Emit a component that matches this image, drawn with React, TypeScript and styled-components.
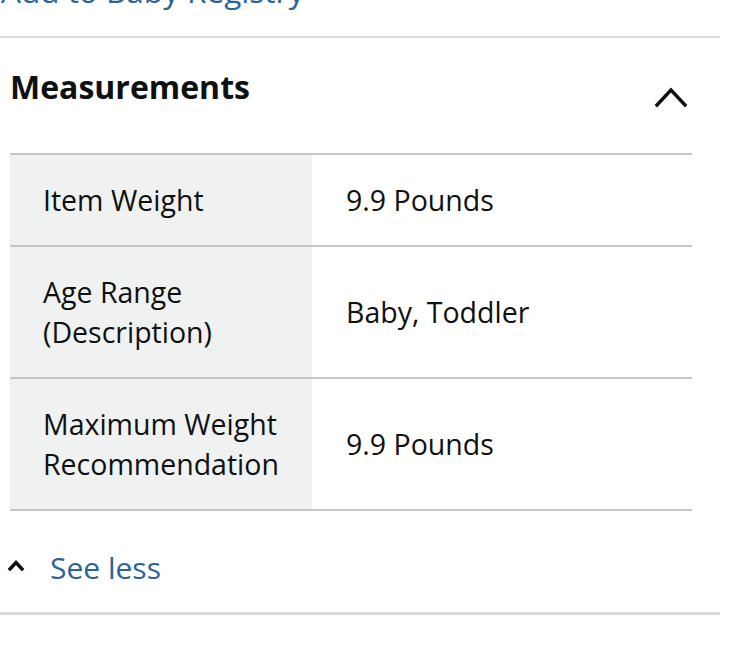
import React from "react";
import styled, { createGlobalStyle } from "styled-components";

const Global = createGlobalStyle`
  html, body { margin: 0; padding: 0; background: #fff; }
  body { font-family: "Open Sans", "Noto Sans", sans-serif; color: #0f1111; overflow: hidden; }
`;

const Page = styled.div`
  width: 739px;
  height: 646px;
  overflow: hidden;
  display: flex;
  flex-direction: column;
`;

const TopLink = styled.div`
  margin-top: -28px;
  padding-left: 1px;
  font-size: 31.5px;
  line-height: 38px;
  color: #2b6496;
  white-space: nowrap;
`;

const Divider = styled.div<{ $top: number; $thick: number }>`
  margin-top: ${(p) => p.$top}px;
  width: 720px;
  height: ${(p) => p.$thick}px;
  background: #d9dcdc;
  flex-shrink: 0;
`;

const Header = styled.div`
  display: flex;
  align-items: flex-start;
  justify-content: space-between;
  width: 692px;
  padding: 0 4px 0 10px;
  margin-top: 27px;
  height: 56px;
  box-sizing: border-box;
`;

const Title = styled.h2`
  margin: 0;
  font-size: 32px;
  font-weight: 700;
  line-height: 44px;
  color: #0f1111;
`;

const HeaderChevron = styled.svg`
  display: block;
  margin-top: 21px;
`;

const SmallChevron = styled.svg`
  display: block;
  margin-bottom: 7px;
`;

const Table = styled.div`
  margin: 32px 0 0 10px;
  width: 682px;
  border-top: 2px solid #c4c7c7;
  display: flex;
  flex-direction: column;
`;

const Row = styled.div`
  display: grid;
  grid-template-columns: 302px 1fr;
  border-bottom: 2px solid #c4c7c7;
`;

const Cell = styled.div<{ $label?: boolean }>`
  background: ${(p) => (p.$label ? "#f0f2f2" : "#fff")};
  padding: 25px 16px 25px ${(p) => (p.$label ? 33 : 34)}px;
  font-size: 28.5px;
  line-height: 40px;
  display: flex;
  align-items: center;
  color: #0f1111;
`;

const SeeLess = styled.div`
  display: flex;
  align-items: center;
  gap: 25px;
  margin-top: 35px;
  padding-left: 7px;
  height: 44px;
`;

const SeeLessText = styled.span`
  font-size: 30px;
  line-height: 40px;
  color: #2b6496;
`;

const rows = [
  { label: ["Item Weight"], value: "9.9 Pounds" },
  { label: ["Age Range", "(Description)"], value: "Baby, Toddler" },
  { label: ["Maximum Weight", "Recommendation"], value: "9.9 Pounds" },
];

export default function App() {
  return (
    <Page>
      <Global />
      <TopLink>Add to Baby Registry</TopLink>
      <Divider $top={26} $thick={2} />
      <Header>
        <Title>Measurements</Title>
        <HeaderChevron width="34" height="22" viewBox="0 0 34 22">
          <path d="M3 19 L17 4 L31 19" fill="none" stroke="#0f1111" strokeWidth="3.4" strokeLinecap="square" strokeLinejoin="miter" />
        </HeaderChevron>
      </Header>
      <Table>
        {rows.map((r) => (
          <Row key={r.value + r.label[0]}>
            <Cell $label>
              <div>
                {r.label.map((l) => (
                  <div key={l}>{l}</div>
                ))}
              </div>
            </Cell>
            <Cell>{r.value}</Cell>
          </Row>
        ))}
      </Table>
      <SeeLess>
        <SmallChevron width="18" height="12" viewBox="0 0 18 12">
          <path d="M3 10 L9 3.5 L15 10" fill="none" stroke="#0f1111" strokeWidth="3.4" strokeLinecap="square" />
        </SmallChevron>
        <SeeLessText>See less</SeeLessText>
      </SeeLess>
      <Divider $top={22} $thick={3} />
    </Page>
  );
}
